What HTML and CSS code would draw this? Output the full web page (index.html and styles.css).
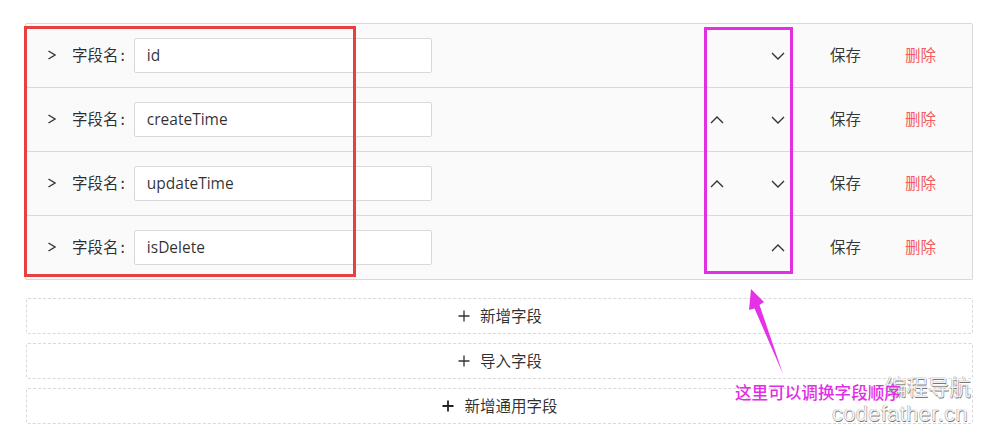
FILE: index.html
```html
<!DOCTYPE html>
<html lang="zh-CN">
<head>
<meta charset="utf-8">
<title>字段列表</title>
<link rel="stylesheet" href="styles.css">
</head>
<body>
<div class="page">
  <div class="collapse">
    <div class="item">
      <div class="header">
        <svg class="arrow" width="10" height="10" viewBox="0 0 10 10"><path d="M1.5 1 L8 5 L1.5 9" /></svg>
        <span class="label">字段名</span>
        <input class="input" value="id">
        <div class="spacer"></div>
        <span class="mv"></span>
        <button class="mv"><svg width="14" height="10" viewBox="0 0 14 10"><path d="M1 2 L7 8 L13 2"/></svg></button>
        <button class="link save">保存</button>
        <button class="link danger">删除</button>
      </div>
    </div>
    <div class="item">
      <div class="header">
        <svg class="arrow" width="10" height="10" viewBox="0 0 10 10"><path d="M1.5 1 L8 5 L1.5 9" /></svg>
        <span class="label">字段名</span>
        <input class="input" value="createTime">
        <div class="spacer"></div>
        <button class="mv"><svg width="14" height="10" viewBox="0 0 14 10"><path d="M1 8 L7 2 L13 8"/></svg></button>
        <button class="mv"><svg width="14" height="10" viewBox="0 0 14 10"><path d="M1 2 L7 8 L13 2"/></svg></button>
        <button class="link save">保存</button>
        <button class="link danger">删除</button>
      </div>
    </div>
    <div class="item">
      <div class="header">
        <svg class="arrow" width="10" height="10" viewBox="0 0 10 10"><path d="M1.5 1 L8 5 L1.5 9" /></svg>
        <span class="label">字段名</span>
        <input class="input" value="updateTime">
        <div class="spacer"></div>
        <button class="mv"><svg width="14" height="10" viewBox="0 0 14 10"><path d="M1 8 L7 2 L13 8"/></svg></button>
        <button class="mv"><svg width="14" height="10" viewBox="0 0 14 10"><path d="M1 2 L7 8 L13 2"/></svg></button>
        <button class="link save">保存</button>
        <button class="link danger">删除</button>
      </div>
    </div>
    <div class="item">
      <div class="header">
        <svg class="arrow" width="10" height="10" viewBox="0 0 10 10"><path d="M1.5 1 L8 5 L1.5 9" /></svg>
        <span class="label">字段名</span>
        <input class="input" value="isDelete">
        <div class="spacer"></div>
        <span class="mv"></span>
        <button class="mv"><svg width="14" height="10" viewBox="0 0 14 10"><path d="M1 8 L7 2 L13 8"/></svg></button>
        <button class="link save">保存</button>
        <button class="link danger">删除</button>
      </div>
    </div>
  </div>

  <div class="btns">
    <button class="dashed"><svg class="plus" width="14" height="14" viewBox="0 0 14 14"><path d="M7 1.5 V12.5 M1.5 7 H12.5"/></svg><span>新增字段</span></button>
    <button class="dashed"><svg class="plus" width="14" height="14" viewBox="0 0 14 14"><path d="M7 1.5 V12.5 M1.5 7 H12.5"/></svg><span>导入字段</span></button>
    <button class="dashed"><svg class="plus bold" width="14" height="14" viewBox="0 0 14 14"><path d="M7 1.5 V12.5 M1.5 7 H12.5"/></svg><span>新增通用字段</span></button>
  </div>

  <div class="mark red-box"></div>
  <div class="mark pink-box"></div>
  <svg class="mark pointer" width="983" height="442" viewBox="0 0 983 442">
    <polygon points="751,289 764,302 759.5,305 783,374 754.5,308.5 749,310" />
  </svg>
  <div class="mark wm wm-cn">编程导航</div>
  <div class="mark wm wm-en">codefather.cn</div>
  <div class="mark note">这里可以调换字段顺序</div>
</div>
</body>
</html>
```

FILE: styles.css
```css
* { box-sizing: border-box; }
html, body { margin: 0; padding: 0; background: #fff; }
body {
  font-family: "Open Sans", "Noto Sans CJK SC", sans-serif;
  font-size: 15.5px;
  color: rgba(0, 0, 0, 0.82);
}
.page {
  position: relative;
  width: 983px;
  height: 442px;
  padding: 23px 0 0 25px;
  overflow: hidden;
}
.collapse {
  width: 948px;
  border: 1px solid #d9d9d9;
  border-bottom: 0;
  background: #fafafa;
  border-radius: 2px;
}
.item { border-bottom: 1px solid #d9d9d9; }
.header {
  height: 63px;
  display: flex;
  align-items: center;
  padding: 0 21px 0 21px;
}
.arrow { flex: none; margin-bottom: 1px; }
.arrow path, .mv path {
  fill: none;
  stroke: #333;
  stroke-width: 1.4;
}
.label {
  margin-left: 15px;
  margin-bottom: 3px;
  font-family: "Noto Sans CJK SC", sans-serif;
  white-space: nowrap;
}
.label::after {
  content: ":";
  margin: 0 9px 0 2px;
}
.input {
  width: 298px;
  height: 35px;
  border: 1px solid #d9d9d9;
  border-radius: 2px;
  background: #fff;
  padding: 0 12px 2px;
  font-family: "Open Sans", "Noto Sans CJK SC", sans-serif;
  font-size: 15.5px;
  color: rgba(0, 0, 0, 0.82);
  outline: none;
}
.spacer { flex: 1; }
.mv {
  width: 32px;
  height: 32px;
  display: flex;
  align-items: center;
  justify-content: center;
  border: 0;
  padding: 0;
  background: transparent;
  margin-left: 29px;
}
.mv:first-of-type { margin-left: 0; }
.link {
  border: 0;
  background: transparent;
  padding: 0 15px 3px;
  height: 32px;
  font-family: "Noto Sans CJK SC", sans-serif;
  font-size: 15.5px;
  color: rgba(0, 0, 0, 0.8);
}
.save { margin-left: 21px; }
.danger { margin-left: 14px; color: #f35b5e; }

.btns {
  width: 947px;
  margin: 18px 0 0 1px;
  display: flex;
  flex-direction: column;
  gap: 9px;
}
.dashed {
  height: 36px;
  border: 1px dashed #d9d9d9;
  background: #fff;
  border-radius: 2px;
  display: flex;
  align-items: center;
  justify-content: center;
  font-family: "Noto Sans CJK SC", sans-serif;
  font-size: 15.5px;
  color: rgba(0, 0, 0, 0.82);
  padding: 0 0 2px;
}
.plus { margin-right: 9px; margin-top: 1px; }
.plus path { stroke: #333; stroke-width: 1.3; fill: none; }
.plus.bold path { stroke-width: 1.8; stroke: #222; }

.mark { position: absolute; }
.red-box {
  left: 24px; top: 26px;
  width: 332px; height: 251px;
  border: 3px solid #e8403f;
}
.pink-box {
  left: 704px; top: 27px;
  width: 89px; height: 247px;
  border: 3px solid #e12fe4;
}
.pointer { left: 0; top: 0; }
.pointer polygon { fill: #e532e6; }
.wm {
  color: #f2f2f2;
  text-shadow: 0.5px 0.5px 0.5px #777, -0.5px -0.5px 0.5px #aaa;
  white-space: nowrap;
}
.wm-cn {
  left: 885px; top: 371px;
  font-family: "Noto Sans CJK SC", sans-serif;
  font-size: 21.5px;
  line-height: 30px;
}
.wm-en {
  left: 832px; top: 400px;
  font-family: "Liberation Sans", sans-serif;
  font-size: 22px;
  line-height: 28px;
  letter-spacing: 0.3px;
}
.note {
  left: 735px; top: 380px;
  font-family: "Noto Sans CJK SC", sans-serif;
  font-size: 16.6px;
  line-height: 24px;
  font-weight: 500;
  color: #e22ee4;
  white-space: nowrap;
}
```
